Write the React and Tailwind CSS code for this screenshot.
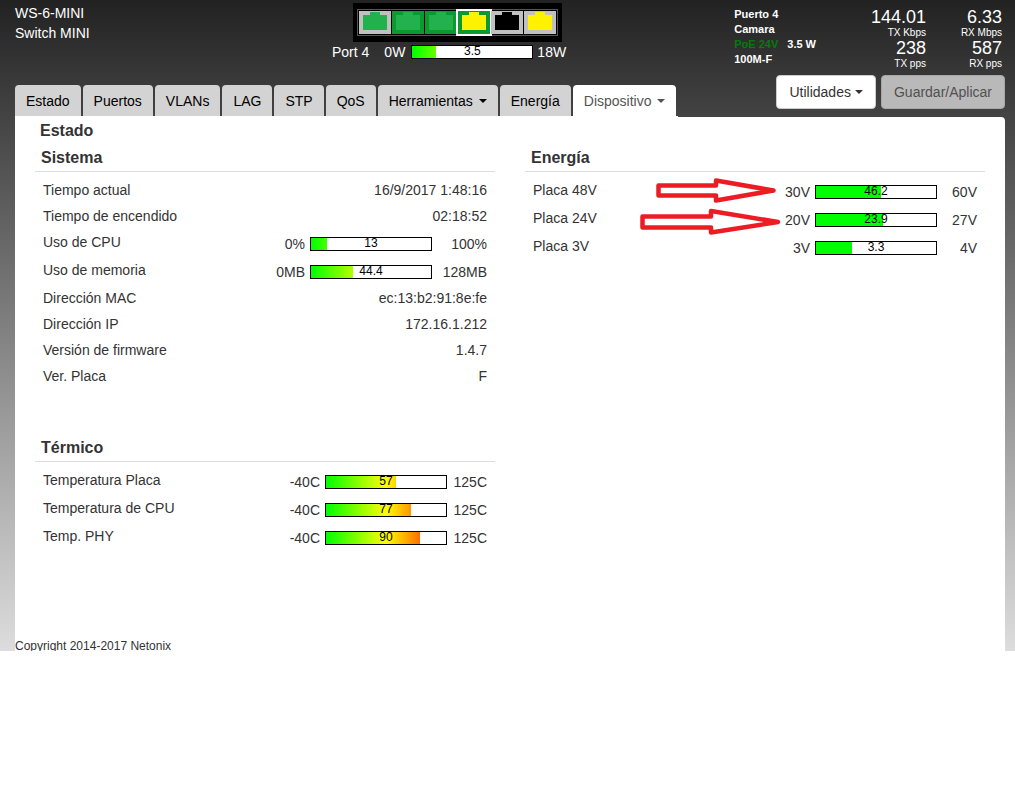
import React from "react";

const PORTS = [
  { x: 6, bg: "#c0c0c0", jack: "#22b14c" },
  { x: 39, bg: "#0a9a30", jack: "#22b14c" },
  { x: 72, bg: "#0a9a30", jack: "#22b14c" },
  { x: 105, bg: "#0a9a30", jack: "#fff200", selected: true },
  { x: 138, bg: "#c0c0c0", jack: "#000000" },
  { x: 171, bg: "#c0c0c0", jack: "#fff200" },
];

function PortStrip() {
  return (
    <svg width="209" height="39" viewBox="0 0 209 39" role="img" aria-label="Puertos" className="block">
      <rect width="209" height="39" fill="#000" />
      <rect x="4.5" y="6.5" width="200" height="26" fill="none" stroke="#555" />
      {PORTS.map((p) => (
        <g key={p.x}>
          <rect x={p.x} y="8" width="32" height="23" fill={p.bg} />
          <path d={`M${p.x + 4} 12h7V9h10v3h4v15h-21z`} fill={p.jack} />
          <path d={`M${p.x + 4} 12h24v15h-24z`} fill={p.jack} />
          {p.selected && (
            <rect x={p.x - 1} y="7" width="34" height="25" fill="none" stroke="#fff" strokeWidth="2" />
          )}
        </g>
      ))}
    </svg>
  );
}

function Bar({ label, value, percent, solid }) {
  return (
    <div
      role="meter"
      aria-label={label}
      aria-valuenow={value}
      className="relative h-[14px] w-[122px] shrink-0 border border-black bg-white"
    >
      <div className="h-full overflow-hidden" style={{ width: `${percent}%` }}>
        <div
          className={
            solid
              ? "h-full w-[120px] bg-[#00ff00]"
              : "h-full w-[120px] bg-[linear-gradient(to_right,#00ff00,#ffff00_50%,#ff0000)]"
          }
        />
      </div>
      <span className="absolute inset-x-0 top-0 text-center text-[12px] leading-[10px] text-black">{value}</span>
    </div>
  );
}

function Caret() {
  return (
    <svg width="8" height="4" viewBox="0 0 8 4" aria-hidden="true" className="fill-current">
      <path d="M0 0h8L4 4z" />
    </svg>
  );
}

function MeterRow({ label, min, max, value, percent, solid, wide }) {
  return (
    <tr>
      <th scope="row" className="py-[3px] pl-2 text-left align-top font-normal">{label}</th>
      <td className="pt-[5px] pr-2 pb-[3px]">
        <div className="flex items-center justify-end">
          <span className="mr-[5px]">{min}</span>
          <Bar label={label} value={value} percent={percent} solid={solid} />
          <span className={wide ? "w-[55px] text-right" : "w-10 text-right"}>{max}</span>
        </div>
      </td>
    </tr>
  );
}

function TextRow({ label, value }) {
  return (
    <tr>
      <th scope="row" className="py-[3px] pl-2 text-left align-top font-normal">{label}</th>
      <td className="py-[3px] pr-2 text-right">{value}</td>
    </tr>
  );
}

function Section({ title, className = "", children }) {
  return (
    <section className={className}>
      <h2 className="mb-[5px] border-b border-[#ddd] pb-[3px] pl-[6px] text-[16px] leading-5 font-bold">{title}</h2>
      <table className="w-full">
        <tbody>{children}</tbody>
      </table>
    </section>
  );
}

function Stat({ value, unit }) {
  return (
    <div className="text-right">
      <div className="text-[18px] leading-5">{value}</div>
      <div className="text-[10px] leading-[11px]">{unit}</div>
    </div>
  );
}

const TABS = [
  { name: "Estado" },
  { name: "Puertos" },
  { name: "VLANs" },
  { name: "LAG" },
  { name: "STP" },
  { name: "QoS" },
  { name: "Herramientas", menu: true },
  { name: "Energía" },
  { name: "Dispositivo", menu: true, active: true },
];

export default function App() {
  return (
    <div className="min-h-screen bg-white font-['Liberation_Sans',Arial,sans-serif] text-[14px] leading-5 text-[#333]">
      <div className="bg-[linear-gradient(to_bottom,#222222,#dddddd)] pr-[10px] pl-[15px]">
        <header className="flex h-[75px] text-white">
          <div className="w-[317px] pt-[3px]">
            <div>WS-6-MINI</div>
            <div>Switch MINI</div>
          </div>
          <div className="pt-[3px]">
            <div className="pl-[21px]">
              <PortStrip />
            </div>
            <div className="flex items-center">
              <span className="mr-[15px]">Port 4</span>
              <span className="mr-[6px]">0W</span>
              <Bar label="Port 4" value="3.5" percent={20} />
              <span className="ml-1">18W</span>
            </div>
          </div>
          <div className="ml-auto pt-[7px] text-[11px] leading-[15px] font-bold">
            <div>Puerto 4</div>
            <div>Camara</div>
            <div className="flex gap-[9px]">
              <span className="text-[#087a08]">PoE 24V</span>
              <span>3.5 W</span>
            </div>
            <div>100M-F</div>
          </div>
          <div className="grid w-[189px] grid-cols-[1fr_76px] content-start pt-[7px] pr-[3px]">
            <Stat value="144.01" unit="TX Kbps" />
            <Stat value="6.33" unit="RX Mbps" />
            <Stat value="238" unit="TX pps" />
            <Stat value="587" unit="RX pps" />
          </div>
        </header>

        <div className="flex items-end justify-between">
          <nav className="flex gap-[2px] border-b border-white pr-[2px]">
            {TABS.map((t) => (
              <a
                key={t.name}
                href="#"
                className={
                  t.active
                    ? "flex h-[31px] items-center gap-[6px] rounded-t bg-white px-[11px] text-[#555]"
                    : "flex h-[31px] items-center gap-[6px] rounded-t bg-[#d3d3d3] px-[11px] text-black"
                }
              >
                {t.name}
                {t.menu && <Caret />}
              </a>
            ))}
          </nav>
          <div className="mb-2 flex gap-[5px]">
            <button
              type="button"
              className="flex h-[34px] items-center gap-1 rounded border border-[#ccc] bg-white px-3 text-[#333]"
            >
              Utilidades
              <Caret />
            </button>
            <button
              type="button"
              className="h-[34px] rounded border border-[#a6a6a6] bg-[#b9b9b9] px-3 text-[#505050]"
            >
              Guardar/Aplicar
            </button>
          </div>
        </div>

        <main className="rounded-tr bg-white px-5 pt-1 pb-[87px]">
          <h1 className="mb-[7px] pl-[5px] text-[16px] leading-5 font-bold">Estado</h1>
          <div className="grid grid-cols-2 gap-[30px]">
            <div>
              <Section title="Sistema">
                <TextRow label="Tiempo actual" value="16/9/2017 1:48:16" />
                <TextRow label="Tiempo de encendido" value="02:18:52" />
                <MeterRow label="Uso de CPU" min="0%" max="100%" value="13" percent={13} wide />
                <MeterRow label="Uso de memoria" min="0MB" max="128MB" value="44.4" percent={35} wide />
                <TextRow label="Dirección MAC" value="ec:13:b2:91:8e:fe" />
                <TextRow label="Dirección IP" value="172.16.1.212" />
                <TextRow label="Versión de firmware" value="1.4.7" />
                <TextRow label="Ver. Placa" value="F" />
              </Section>
              <Section title="Térmico" className="mt-[49px]">
                <MeterRow label="Temperatura Placa" min="-40C" max="125C" value="57" percent={58} />
                <MeterRow label="Temperatura de CPU" min="-40C" max="125C" value="77" percent={71} />
                <MeterRow label="Temp. PHY" min="-40C" max="125C" value="90" percent={78} />
              </Section>
            </div>
            <div className="relative">
              <Section title="Energía">
                <MeterRow label="Placa 48V" min="30V" max="60V" value="46.2" percent={54} solid />
                <MeterRow label="Placa 24V" min="20V" max="27V" value="23.9" percent={56} solid />
                <MeterRow label="Placa 3V" min="3V" max="4V" value="3.3" percent={30} solid />
              </Section>
              <svg
                width="148"
                height="62"
                viewBox="636 176 148 62"
                aria-hidden="true"
                className="pointer-events-none absolute top-7 right-[201px]"
                fill="none"
                stroke="#ed1c24"
                strokeWidth="4.5"
                strokeLinejoin="round"
              >
                <path d="M658.5 185.5H716V180.5L773.5 190.5L716 200.5V195.5H658.5Z" />
                <path d="M642.5 216.5H711V211L778 222L711 232.5V227.5H642.5Z" />
              </svg>
            </div>
          </div>
        </main>
        <footer className="h-[13px] overflow-hidden bg-white text-[12px] leading-4">Copyright 2014-2017 Netonix</footer>
      </div>
    </div>
  );
}
